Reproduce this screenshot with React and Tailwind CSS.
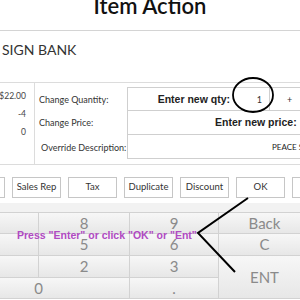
import React from 'react';

const buttons = ['Void', 'Sales Rep', 'Tax', 'Duplicate', 'Discount', 'OK', 'Cancel'];

const keys = [
  { label: '7' },
  { label: '8' },
  { label: '9' },
  { label: 'Back' },
  { label: '4' },
  { label: '5' },
  { label: '6' },
  { label: 'C' },
  { label: '1' },
  { label: '2' },
  { label: '3' },
  { label: 'ENT', span: 'row-span-2' },
  { label: '0', span: 'col-span-2' },
  { label: '.' },
];

const ItemAction = () => {
  return (
    <div className="relative w-[300px] h-[300px] overflow-hidden bg-white font-['Lato',sans-serif]">
      {/* Header */}
      <div className="h-[31px] border-b border-[#d4d4d4] flex justify-center overflow-hidden">
        <h1 className="text-[22px] leading-[22px] font-semibold text-[#111] -mt-[5px]">Item Action</h1>
      </div>

      {/* Item name */}
      <div className="h-[51px] pl-[2px] pt-[10px]">
        <div className="text-[14px] leading-[18px] text-[#333]">SIGN BANK</div>
      </div>

      {/* Details */}
      <div className="h-[83px] border-y border-[#dcdcdc] flex">
        <div className="w-[35px] border-r border-[#dcdcdc] flex flex-col items-end pr-[8px] pt-[7px] gap-[5px] text-[8.5px] leading-[13px] text-[#444]">
          <span>$22.00</span>
          <span>-4</span>
          <span>0</span>
        </div>
        <div className="flex-1 pt-[4px]">
          <div className="flex h-[23px]">
            <div className="w-[92px] pl-[4px] pt-[6px] text-[9px] leading-[13px] text-[#333]">Change Quantity:</div>
            <div className="flex-1 flex border-t border-l border-[#cfcfcf]">
              <div className="w-[142px] flex border-r border-[#cfcfcf]">
                <div className="w-[102px] text-right pt-[4px] text-[10.5px] leading-[14px] font-bold text-[#222] font-['Liberation_Sans',sans-serif]">Enter new qty:</div>
                <div className="flex-1 text-right pr-[7px] pt-[6px] text-[9px] leading-[12px] text-[#333]">1</div>
              </div>
              <div className="flex-1 pl-[17px] pt-[6px] text-[9px] leading-[12px] text-[#333]">+</div>
            </div>
          </div>
          <div className="flex h-[24px]">
            <div className="w-[92px] pl-[4px] pt-[6px] text-[9px] leading-[13px] text-[#333]">Change Price:</div>
            <div className="flex-1 border-t border-l border-[#cfcfcf] pl-[87px] pt-[4px] text-[10.5px] leading-[14px] font-bold text-[#222] whitespace-nowrap font-['Liberation_Sans',sans-serif]">
              Enter new price:
            </div>
          </div>
          <div className="flex h-[25px]">
            <div className="w-[92px] pl-[6px] pt-[7px] text-[9px] leading-[13px] text-[#333] whitespace-nowrap">Override Description:</div>
            <div className="flex-1 border-y border-l border-[#cfcfcf] pl-[144px] pt-[7px] text-[8px] leading-[11px] text-[#222] whitespace-nowrap">
              PEACE SIGN BANK
            </div>
          </div>
        </div>
      </div>

      {/* Action buttons */}
      <div className="mt-[12px] h-[21px] flex gap-[7px] -ml-[44px] whitespace-nowrap">
        {buttons.map((b) => (
          <div
            key={b}
            className="shrink-0 w-[49px] h-[21px] border border-[#c6c6c6] bg-white flex items-center justify-center text-[9.5px] text-[#333]"
          >
            {b}
          </div>
        ))}
      </div>

      {/* Keypad */}
      <div className="mt-[5px] h-[9px] bg-[#f2f2f2]" />
      <div className="grid grid-cols-[91px_91px_89px_92px] grid-rows-[21px_22px_22px_21px] -ml-[52px] border-t border-[#d2d2d2]">
        {keys.map((k) => (
          <div
            key={k.label}
            className={`${k.span || ''} border-r border-b border-[#d2d2d2] bg-gradient-to-b from-[#f7f7f7] to-[#e7e7e7] flex items-center justify-center text-[15px] text-[#8a8a8a]`}
          >
            {k.label}
          </div>
        ))}
      </div>

      {/* Hint */}
      <div className="absolute left-[17px] top-[228px] text-[10.5px] leading-[14px] font-bold text-[#b04ac2] font-['Liberation_Sans',sans-serif] whitespace-nowrap">
        Press "Enter" or click "OK" or "Ent"
      </div>

      {/* Annotations */}
      <svg className="absolute left-0 top-0 pointer-events-none" width="300" height="300" viewBox="0 0 300 300">
        <ellipse cx="253" cy="95" rx="20" ry="17" fill="none" stroke="#000" strokeWidth="1.8" />
        <polyline points="248,198 198,233 235,272" fill="none" stroke="#000" strokeWidth="2" />
      </svg>
    </div>
  );
};

export default function App() {
  return <ItemAction />;
}
